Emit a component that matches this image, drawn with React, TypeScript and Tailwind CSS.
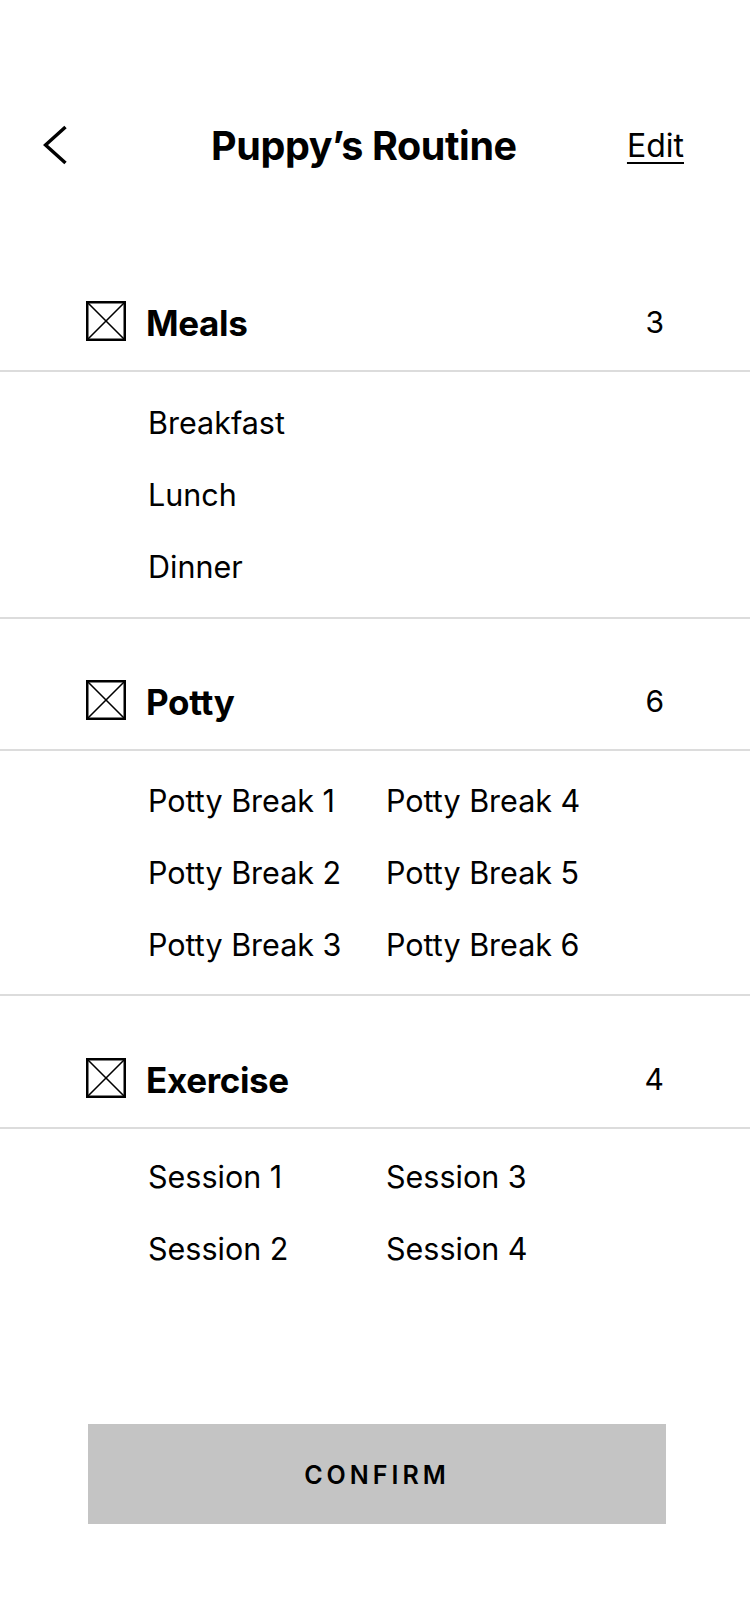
import React from "react";

const Box = () => (
  <svg width="40" height="40" viewBox="0 0 40 40" className="shrink-0">
    <rect x="1.25" y="1.25" width="37.5" height="37.5" fill="none" stroke="#000" strokeWidth="2.5" />
    <line x1="1" y1="1" x2="39" y2="39" stroke="#000" strokeWidth="1.6" />
    <line x1="39" y1="1" x2="1" y2="39" stroke="#000" strokeWidth="1.6" />
  </svg>
);

const Divider = () => <div className="h-[2px] w-full bg-[#dcdcdc]" />;

function SectionHeader({ title, count, mt }: { title: string; count: number; mt: string }) {
  return (
    <div className={`flex h-[40px] items-center pl-[86px] pr-[86px] ${mt} mb-[29px]`}>
      <Box />
      <span className="ml-[20px] mt-[4px] text-[35px] font-bold leading-none tracking-[-0.01em]">{title}</span>
      <span className="ml-auto mt-[2px] text-[30px] leading-none">{count}</span>
    </div>
  );
}

export default function App() {
  return (
    <div
      className="relative w-[750px] h-[1624px] bg-white text-black overflow-hidden"
      style={{ fontFamily: "Inter, 'Noto Sans', sans-serif" }}
    >
      {/* Top bar */}
      <div className="mt-[125px] flex h-[40px] items-center pl-[43px] pr-[66px]">
        <svg width="25" height="40" viewBox="0 0 25 40" className="shrink-0">
          <polyline points="22.5,2 2.5,20 22.5,38" fill="none" stroke="#000" strokeWidth="3.5" />
        </svg>
        <h1 className="ml-[143px] mt-[4px] text-[39.5px] font-bold leading-none tracking-[-0.01em]">Puppy’s Routine</h1>
        <span className="ml-auto mt-[2px] text-[32px] leading-none underline decoration-[2px] underline-offset-[5px]">Edit</span>
      </div>

      {/* Meals */}
      <SectionHeader title="Meals" count={3} mt="mt-[136px]" />
      <Divider />
      <div className="pl-[148px] pt-[15px] pb-[14px]">
        {["Breakfast", "Lunch", "Dinner"].map((t) => (
          <div key={t} className="flex h-[72px] items-center text-[30.5px]">{t}</div>
        ))}
      </div>
      <Divider />

      {/* Potty */}
      <SectionHeader title="Potty" count={6} mt="mt-[61px]" />
      <Divider />
      <div className="grid grid-flow-col grid-rows-3 grid-cols-[238px_1fr] pl-[148px] pt-[14px] pb-[13px]">
        {[1, 2, 3, 4, 5, 6].map((n) => (
          <div key={n} className="flex h-[72px] items-center text-[30.5px]">Potty Break {n}</div>
        ))}
      </div>
      <Divider />

      {/* Exercise */}
      <SectionHeader title="Exercise" count={4} mt="mt-[62px]" />
      <Divider />
      <div className="grid grid-flow-col grid-rows-2 grid-cols-[238px_1fr] pl-[148px] pt-[12px]">
        {[1, 2, 3, 4].map((n) => (
          <div key={n} className="flex h-[72px] items-center text-[30.5px]">Session {n}</div>
        ))}
      </div>

      {/* Confirm */}
      <div className="mt-[139px] pl-[88px]">
        <button className="flex h-[100px] w-[578px] items-center justify-center bg-[#c4c4c4] pt-[3px] text-[25px] font-semibold tracking-[0.16em]">
          CONFIRM
        </button>
      </div>
    </div>
  );
}
